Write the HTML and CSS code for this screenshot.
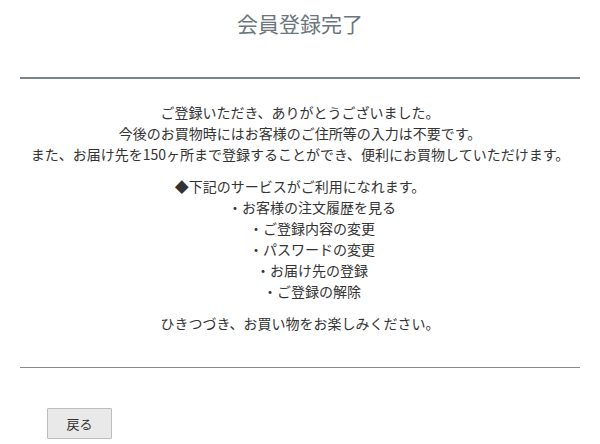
FILE: index.html
```html
<!DOCTYPE html>
<html>
  <head>
    <meta charset="utf-8" />
    <title>会員登録完了</title>
    <link rel="stylesheet" href="styles.css">
  </head>
  <body>
    <div class="page">
      <h1 class="page-title">会員登録完了</h1>

      <div class="complete-box">
        <p class="message">
          ご登録いただき、ありがとうございました。<br />
          今後のお買物時にはお客様のご住所等の入力は不要です。<br />
          また、お届け先を150ヶ所まで登録することができ、便利にお買物していただけます。
        </p>

        <div class="message">
          <p class="service-head">◆下記のサービスがご利用になれます。</p>
          <ul class="service-list">
            <li>・お客様の注文履歴を見る</li>
            <li>・ご登録内容の変更</li>
            <li>・パスワードの変更</li>
            <li>・お届け先の登録</li>
            <li>・ご登録の解除</li>
          </ul>
        </div>

        <p class="message">ひきつづき、お買い物をお楽しみください。</p>
      </div>

      <div class="actions">
        <button class="back-button" onclick="history.back()">戻る</button>
      </div>
    </div>
  </body>
</html>
```

FILE: styles.css
```css
body {
  margin: 0;
  padding: 0;
  background-color: #fff;
  color: #333;
  font-family: "Noto Sans CJK JP", "Noto Sans", sans-serif;
  font-size: 14px;
  line-height: 1.5;
}

.page {
  padding: 0 20px;
}

.page-title {
  margin: 0;
  padding: 7px 0 38px;
  font-size: 21px;
  font-weight: normal;
  line-height: 32px;
  color: #6b757e;
  text-align: center;
  border-bottom: 2px solid #7a848c;
}

.complete-box {
  padding: 23px 0 33px;
  text-align: center;
  border-bottom: 1px solid #888;
}

.message {
  margin: 0 0 11px;
}

.message:last-child {
  margin-bottom: 0;
}

.service-head {
  margin: 0;
}

.service-list {
  margin: 0;
  padding: 0 0 0 24px;
  list-style: none;
}

.actions {
  padding: 40px 0 0 27px;
}

.back-button {
  width: 65px;
  height: 31px;
  padding: 0;
  font-family: inherit;
  font-size: 13px;
  color: #333;
  background-color: #e9e9e9;
  border: 1px solid #bdbdbd;
  border-radius: 1px;
  cursor: pointer;
}
```
